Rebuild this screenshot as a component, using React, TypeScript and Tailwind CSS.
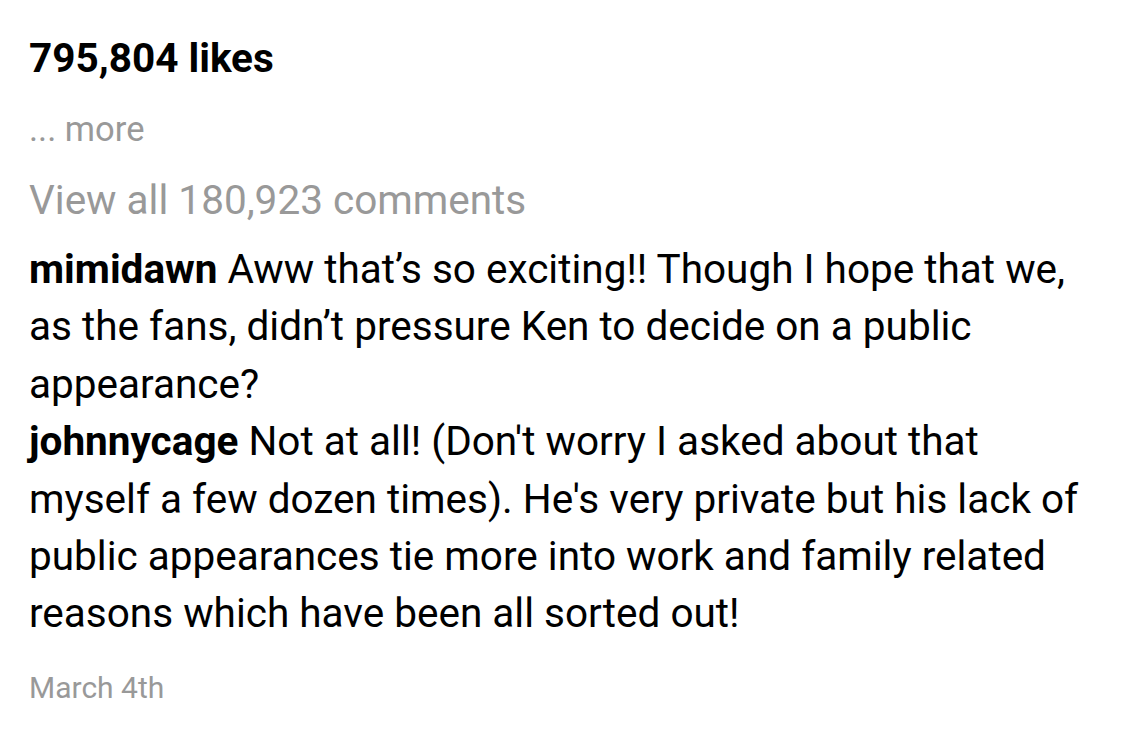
import React from 'react';

interface Comment {
  user: string;
  text: string;
}

const comments: Comment[] = [
  {
    user: 'mimidawn',
    text: 'Aww that’s so exciting!! Though I hope that we, as the fans, didn’t pressure Ken to decide on a public appearance?',
  },
  {
    user: 'johnnycage',
    text: "Not at all! (Don't worry I asked about that myself a few dozen times). He's very private but his lack of public appearances tie more into work and family related reasons which have been all sorted out!",
  },
];

const App = () => {
  return (
    <div
      className="min-h-[732px] w-[1128px] bg-white pl-[29px] pr-[38px] text-black"
      style={{ fontFamily: 'Roboto, "Liberation Sans", sans-serif' }}
    >
      <div className="pt-[34px] text-[40.5px] font-bold leading-[48px]">795,804 likes</div>

      <div className="mt-[23px] text-[34.5px] leading-[48px] text-[#999999]">... more</div>

      <div className="mt-[18px] text-[40.5px] leading-[58px] text-[#999999]">View all 180,923 comments</div>

      <div className="mt-[12px] text-[40.5px] leading-[57.4px]">
        {comments.map((c) => (
          <p key={c.user}>
            <span className="font-bold">{c.user}</span> {c.text}
          </p>
        ))}
      </div>

      <div className="mt-[25px] text-[30px] leading-[40px] text-[#999999]">March 4th</div>
    </div>
  );
};

export default App;
